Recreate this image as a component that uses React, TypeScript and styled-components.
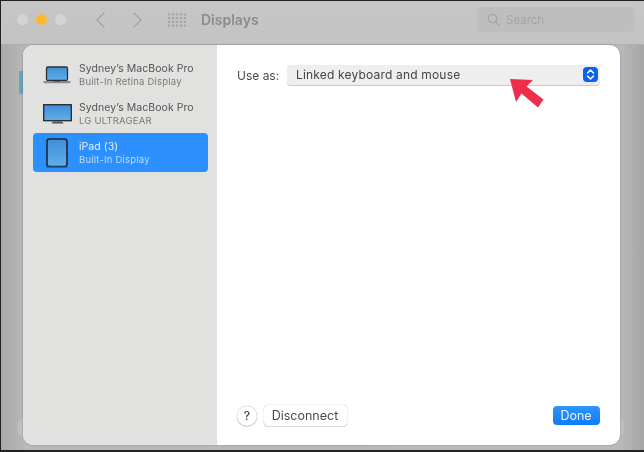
import React from "react";
import styled, { createGlobalStyle } from "styled-components";

const Global = createGlobalStyle`
  html, body { margin: 0; padding: 0; width: 644px; height: 452px; overflow: hidden; background: #1a1a1a; }
  * { box-sizing: border-box; }
  #root { width: 644px; height: 452px; }
`;

const Frame = styled.div`
  position: relative;
  width: 644px;
  height: 452px;
  padding: 1px 0 2px 1px;
  background: #222;
  font-family: Inter, "Noto Sans", "Liberation Sans", sans-serif;
  -webkit-font-smoothing: antialiased;
  filter: blur(0.3px);
`;

const Backdrop = styled.div`
  position: relative;
  height: 100%;
  display: flex;
  flex-direction: column;
  background: linear-gradient(90deg, #a9a9a9 0, #b9b9b9 4%, #bababa 96%, #a6a6a6 100%);
  overflow: hidden;
`;

const TitleBar = styled.div`
  height: 44px;
  flex: none;
  display: flex;
  align-items: center;
  padding: 0 10px 6px 16px;
  background: linear-gradient(#c6c6c6, #c3c3c3);
  border-bottom: 1px solid #b0b0b0;
`;

const Lights = styled.div`
  display: flex;
  gap: 8px;
  margin-right: 28px;
`;

const Light = styled.span<{ $c: string }>`
  width: 11px;
  height: 11px;
  border-radius: 50%;
  background: ${(p) => p.$c};
`;

const NavIcon = styled.svg`
  flex: none;
  display: block;
  color: #a6a6a6;
`;

const NavGap = styled.div<{ $w: number }>`
  flex: none;
  width: ${(p) => p.$w}px;
`;

const Title = styled.div`
  font-size: 14px;
  font-weight: 600;
  color: #8c8c8c;
  margin-left: 15px;
  flex: 1;
`;

const SearchField = styled.div`
  width: 157px;
  height: 25px;
  border-radius: 5px;
  background: #bebebe;
  display: flex;
  align-items: center;
  gap: 6px;
  padding-left: 10px;
  font-size: 11.5px;
  color: #a3a3a3;
`;

const GhostThumb = styled.div`
  position: absolute;
  left: 18px;
  top: 70px;
  width: 8px;
  height: 23px;
  background: #67a5bd;
  border: 1px solid #7f9eab;
`;

const Bump = styled.div<{ $side: "l" | "r" }>`
  position: absolute;
  top: 418px;
  ${(p) => (p.$side === "l" ? "left: 16px;" : "right: 20px;")}
  width: 12px;
  height: 17px;
  border-radius: 6px;
  background: #bfbfbf;
`;

const Sheet = styled.div`
  position: absolute;
  left: 23px;
  top: 45px;
  width: 597px;
  height: 400px;
  display: flex;
  border-radius: 10px;
  overflow: hidden;
  background: #fff;
  box-shadow: 0 0 2px rgba(0, 0, 0, 0.3);
`;

const Sidebar = styled.div`
  width: 194px;
  flex: none;
  background: #e1e1df;
  padding: 10px 9px 0 10px;
  display: flex;
  flex-direction: column;
`;

const Row = styled.div<{ $sel?: boolean }>`
  height: 39px;
  display: flex;
  align-items: center;
  border-radius: 4px;
  background: ${(p) => (p.$sel ? "#2c90ff" : "transparent")};
`;

const IconSlot = styled.div`
  width: 46px;
  flex: none;
  display: flex;
  justify-content: center;
  padding-left: 2px;
  svg { display: block; }
`;

const RowText = styled.div`
  display: flex;
  flex-direction: column;
  gap: 1px;
  white-space: nowrap;
`;

const RowTitle = styled.div<{ $sel?: boolean }>`
  font-size: 10.5px;
  line-height: 13px;
  letter-spacing: 0.05px;
  color: ${(p) => (p.$sel ? "#e6f1ff" : "#555")};
`;

const RowSub = styled.div<{ $sel?: boolean }>`
  font-size: 9.5px;
  line-height: 12px;
  letter-spacing: 0.2px;
  color: ${(p) => (p.$sel ? "#bcdcff" : "#7a7a7a")};
`;

const Main = styled.div`
  flex: 1;
  display: flex;
  flex-direction: column;
  justify-content: space-between;
  padding: 20px 20px 19px 20px;
`;

const Field = styled.div`
  display: flex;
  align-items: center;
`;

const FieldLabel = styled.div`
  width: 50px;
  font-size: 12px;
  color: #4a4a4a;
`;

const Select = styled.div`
  width: 313px;
  height: 20px;
  display: flex;
  align-items: center;
  justify-content: space-between;
  padding: 0 2px 1px 9px;
  border-radius: 4px;
  background: #eeeeee;
  box-shadow: 0 1px 0 #c9c9c9;
  font-size: 12px;
  letter-spacing: 0.18px;
  color: #454545;
`;

const Stepper = styled.div`
  width: 15px;
  height: 15px;
  border-radius: 4px;
  background: #0b62ea;
  display: flex;
  align-items: center;
  justify-content: center;
`;

const Footer = styled.div`
  display: flex;
  align-items: center;
`;

const Help = styled.div`
  width: 20px;
  height: 20px;
  border-radius: 50%;
  background: #fff;
  box-shadow: 0 0 1px rgba(0, 0, 0, 0.45), 0 1px 1px rgba(0, 0, 0, 0.15);
  display: flex;
  align-items: center;
  justify-content: center;
  font-size: 12px;
  font-weight: 500;
  color: #444;
  margin-right: 7px;
`;

const Button = styled.div`
  width: 83px;
  height: 21px;
  padding-right: 1px;
  border-radius: 4px;
  background: #fff;
  box-shadow: 0 0 1px rgba(0, 0, 0, 0.45), 0 1px 1px rgba(0, 0, 0, 0.12);
  display: flex;
  align-items: center;
  justify-content: center;
  font-size: 12.5px;
  color: #4a4a4a;
`;

const Primary = styled(Button)`
  width: 47px;
  height: 19px;
  margin-left: auto;
  background: linear-gradient(#2f94ff, #0f7bfa);
  box-shadow: none;
  color: #eaf4ff;
`;

const Arrow = styled.svg`
  position: absolute;
  left: 505px;
  top: 74px;
`;

const Chevron = ({ d }: { d: string }) => (
  <NavIcon width="14" height="16" viewBox="0 0 14 16" fill="none">
    <path d={d} stroke="currentColor" strokeWidth="1.5" strokeLinecap="round" strokeLinejoin="round" />
  </NavIcon>
);

const Dots = () => (
  <NavIcon width="18" height="14" viewBox="0 0 18 14">
    {[1.5, 5.2, 8.9, 12.6].flatMap((y) =>
      [1, 5, 9, 13, 17].map((x) => (
        <rect key={`${x}-${y}`} x={x - 1.1} y={y - 1.1} width="2.2" height="2.2" rx="0.4" fill="#a5a5a5" />
      ))
    )}
  </NavIcon>
);

const Defs = () => (
  <svg width="0" height="0" style={{ position: "absolute" }}>
    <defs>
      <linearGradient id="scr" x1="0" y1="0" x2="0" y2="1">
        <stop offset="0" stopColor="#3f8fd6" />
        <stop offset="1" stopColor="#62aeea" />
      </linearGradient>
    </defs>
  </svg>
);

const Laptop = () => (
  <svg width="28" height="20" viewBox="0 0 28 20">
    <rect x="3.5" y="2" width="21" height="13.5" rx="1.5" fill="url(#scr)" stroke="#2c2f36" strokeWidth="1.3" />
    <path d="M0.5 16h27v1.2q0 1-1.2 1H1.7q-1.2 0-1.2-1z" fill="#8d8d8d" />
    <rect x="11" y="16" width="6" height="1" fill="#5c5c5c" />
  </svg>
);

const Monitor = () => (
  <svg width="29" height="20" viewBox="0 0 29 20">
    <rect x="0.7" y="0.7" width="27.6" height="16" fill="url(#scr)" stroke="#24272e" strokeWidth="1.3" />
    <path d="M10 17.4h9l1.5 2h-12z" fill="#4e5156" />
  </svg>
);

const Tablet = () => (
  <svg width="22" height="30" viewBox="0 0 22 30">
    <rect x="1" y="1" width="20" height="27.5" rx="2.5" fill="url(#scr)" stroke="#1f2633" strokeWidth="1.6" />
    <rect x="0" y="28.6" width="22" height="1.2" rx="0.6" fill="#1f5fa8" />
  </svg>
);

export default function App() {
  return (
    <>
      <Global />
      <Defs />
      <Frame>
        <Backdrop>
          <TitleBar>
            <Lights>
              <Light $c="#d4d4d4" />
              <Light $c="#fdb92e" />
              <Light $c="#d4d4d4" />
            </Lights>
            <Chevron d="M10 1 L3 8 L10 15" />
            <NavGap $w={22} />
            <Chevron d="M4 1 L11 8 L4 15" />
            <NavGap $w={24} />
            <Dots />
            <Title>Displays</Title>
            <SearchField>
              <NavIcon width="13" height="13" viewBox="0 0 13 13" fill="none">
                <circle cx="5.5" cy="5.5" r="4.2" stroke="#a5a5a5" strokeWidth="1.2" />
                <path d="M8.6 8.6 12 12" stroke="#a5a5a5" strokeWidth="1.4" strokeLinecap="round" />
              </NavIcon>
              Search
            </SearchField>
          </TitleBar>
          <GhostThumb />
          <Bump $side="l" />
          <Bump $side="r" />
        </Backdrop>
        <Sheet>
          <Sidebar>
            <Row>
              <IconSlot><Laptop /></IconSlot>
              <RowText>
                <RowTitle>Sydney’s MacBook Pro</RowTitle>
                <RowSub>Built-In Retina Display</RowSub>
              </RowText>
            </Row>
            <Row>
              <IconSlot><Monitor /></IconSlot>
              <RowText>
                <RowTitle>Sydney’s MacBook Pro</RowTitle>
                <RowSub>LG ULTRAGEAR</RowSub>
              </RowText>
            </Row>
            <Row $sel>
              <IconSlot><Tablet /></IconSlot>
              <RowText>
                <RowTitle $sel>iPad (3)</RowTitle>
                <RowSub $sel>Built-In Display</RowSub>
              </RowText>
            </Row>
          </Sidebar>
          <Main>
            <Field>
              <FieldLabel>Use as:</FieldLabel>
              <Select>
                Linked keyboard and mouse
                <Stepper>
                  <svg width="9" height="13" viewBox="0 0 9 13" fill="none">
                    <path d="M1.5 5 4.5 2l3 3M1.5 8l3 3 3-3" stroke="#fff" strokeWidth="1.5" strokeLinecap="round" strokeLinejoin="round" />
                  </svg>
                </Stepper>
              </Select>
            </Field>
            <Footer>
              <Help>?</Help>
              <Button>Disconnect</Button>
              <Primary>Done</Primary>
            </Footer>
          </Main>
        </Sheet>
        <Arrow width="44" height="38" viewBox="505 74 44 38">
          <path d="M510 79 L533 80 L526.5 86.5 L543.5 99.5 L538 107.5 L521.5 93.5 L516 102 Z" fill="#ee2e49" />
        </Arrow>
      </Frame>
    </>
  );
}
